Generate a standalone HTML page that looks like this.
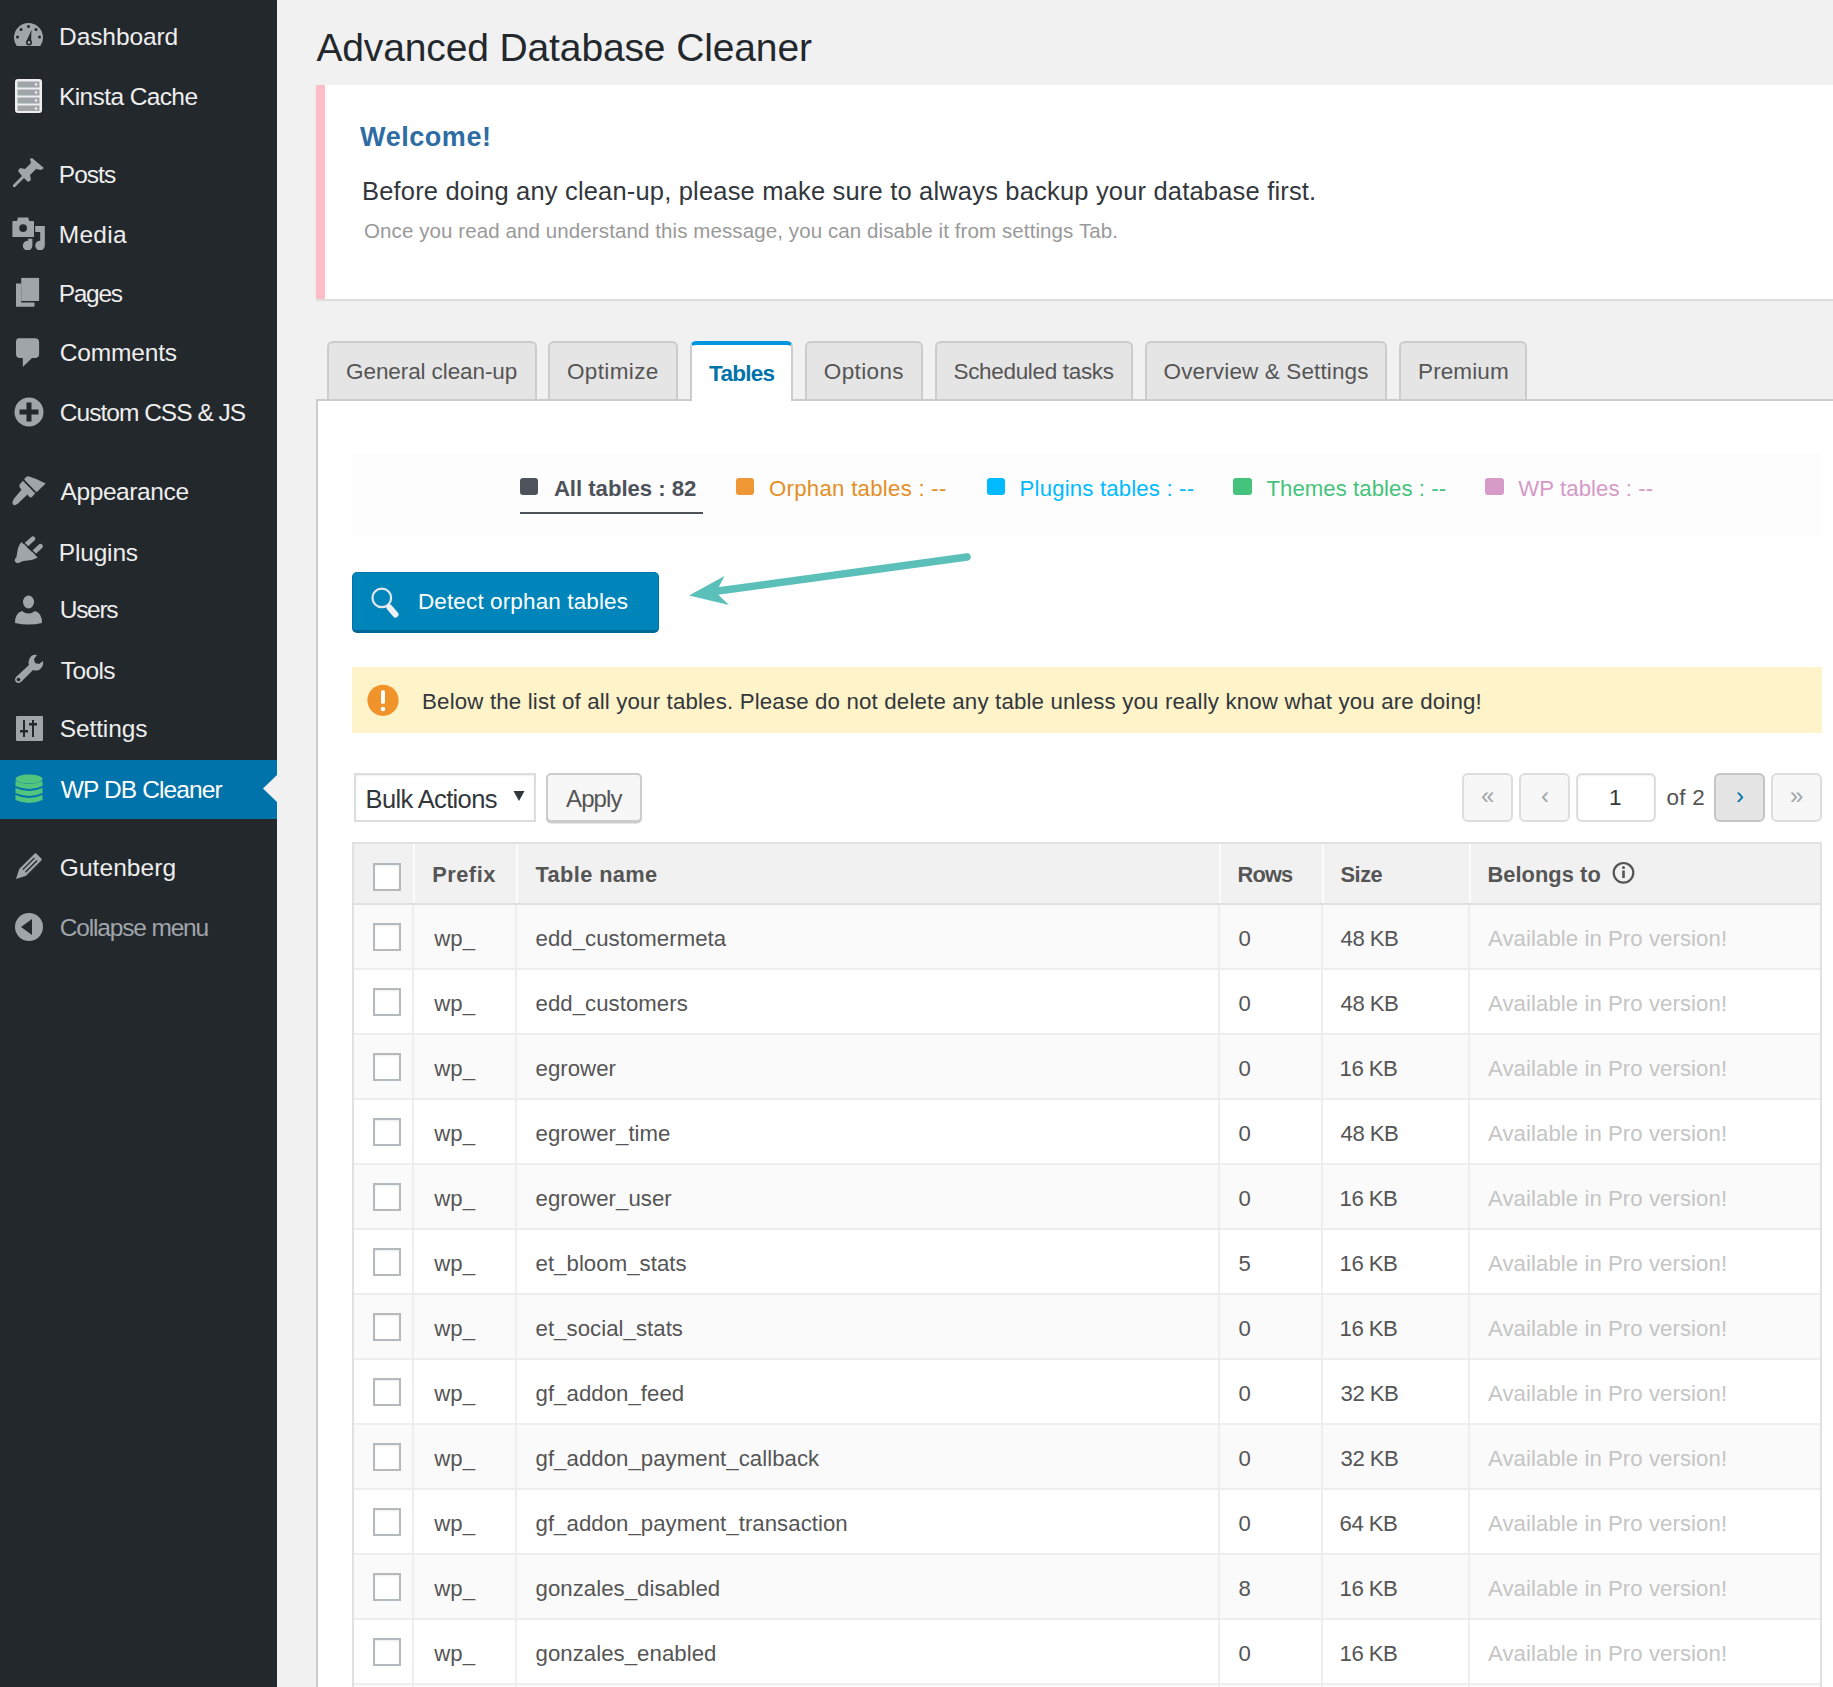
<!DOCTYPE html>
<html><head><meta charset="utf-8">
<style>
html,body{margin:0;padding:0;width:1833px;height:1687px;overflow:hidden;background:#f1f1f1;font-family:"Liberation Sans",sans-serif;}
.a{position:absolute;box-sizing:border-box;}
.t{position:absolute;white-space:nowrap;line-height:1;font-family:"Liberation Sans",sans-serif;}
#side{left:0;top:0;width:277px;height:1687px;background:#23282d;}
.ic{position:absolute;}
.tab{position:absolute;top:341px;height:58px;box-sizing:border-box;border:2px solid #ccc;border-bottom:none;border-radius:6px 6px 0 0;background:#e5e5e5;}
.pg{position:absolute;top:773px;height:49px;box-sizing:border-box;border:2px solid #ddd;border-radius:6px;background:#f7f7f7;}
.cb{position:absolute;left:373px;width:28px;height:28px;box-sizing:border-box;border:2px solid #b4b9be;background:#fff;box-shadow:inset 0 1px 2px rgba(0,0,0,.08);}
.row{position:absolute;left:354px;width:1466px;height:65px;}
.vl{position:absolute;width:2px;background:#eeeeee;}
</style></head><body>
<!-- sidebar -->
<div class="a" id="side"></div>
<div class="a" style="left:0;top:760px;width:277px;height:59px;background:#0073aa"></div>
<svg class="ic" style="left:262px;top:774px" width="16" height="30"><polygon points="15,1 1,14.5 15,28" fill="#f1f1f1"/></svg>

<!-- sidebar icons -->
<svg class="ic" style="left:12px;top:20px" width="34" height="30" viewBox="0 0 34 30">
 <path d="M4.75,26 A14.5,14.5 0 1 1 28.25,26 Z" fill="#a0a5aa"/>
 <circle cx="16.5" cy="6.5" r="1.5" fill="#23282d"/><circle cx="9" cy="9.5" r="1.5" fill="#23282d"/><circle cx="24" cy="9.5" r="1.5" fill="#23282d"/>
 <circle cx="5.5" cy="17" r="1.5" fill="#23282d"/><circle cx="27.5" cy="17" r="1.5" fill="#23282d"/>
 <path d="M14.5,21 L19.5,10 L19,22.5 Z" fill="#23282d"/><circle cx="17" cy="22.5" r="3" fill="#23282d"/><circle cx="17" cy="22.5" r="1.4" fill="#a0a5aa"/>
</svg>
<svg class="ic" style="left:14px;top:78px" width="30" height="36" viewBox="0 0 30 36">
 <rect x="1" y="1" width="27" height="34" rx="3" fill="#eee"/>
 <rect x="3.5" y="3.5" width="22" height="6" fill="#a0a5aa"/><rect x="3.5" y="11.5" width="22" height="6" fill="#a0a5aa"/>
 <rect x="3.5" y="19.5" width="22" height="6" fill="#a0a5aa"/><rect x="3.5" y="27.5" width="22" height="5.5" fill="#a0a5aa"/>
 <circle cx="22" cy="6.5" r="1.3" fill="#eee"/><circle cx="22" cy="14.5" r="1.3" fill="#eee"/><circle cx="22" cy="22.5" r="1.3" fill="#eee"/><circle cx="22" cy="30.5" r="1.3" fill="#eee"/>
</svg>
<svg class="ic" style="left:12px;top:156px" width="34" height="34" viewBox="0 0 34 34">
 <path d="M20,2 L32,12 L29,14 L24,13 L18,19 L19,24 L16,26 L12,22 L3,31 L1,31 L1,29 L10,20 L6,15 L8,12 L13,13 L19,7 L18,3 Z" fill="#a0a5aa"/>
</svg>
<svg class="ic" style="left:10px;top:214px" width="40" height="36" viewBox="10 214 40 36">
 <path d="M12.4,222 Q12.4,221 13.4,221 L17,221 L18,217.4 L28.2,217.4 L29.2,221 L33,221 Q34,221 34,222 L34,237 L12.4,237 Z" fill="#a0a5aa"/>
 <circle cx="23.1" cy="228.1" r="3.9" fill="#23282d"/>
 <path d="M35.2,226 L44.8,226 L44.8,245.5 A4.8,4.8 0 1 1 40.2,240.8 L40.2,232 L35.2,232 Z" fill="#a0a5aa"/>
 <path d="M28.1,238.8 L32.4,238.8 L32.4,245.5 A4.8,4.8 0 1 1 28.1,240.9 Z" fill="#a0a5aa"/>
</svg>
<svg class="ic" style="left:10px;top:274px" width="36" height="36" viewBox="10 274 36 36">
 <rect x="21.2" y="277.9" width="17.9" height="23.1" fill="#a0a5aa"/>
 <path d="M16,283.6 L21.2,283.6 L21.2,302.4 L34.5,302.4 L34.5,306.7 L16,306.7 Z" fill="#a0a5aa"/>
</svg>
<svg class="ic" style="left:14px;top:337px" width="28" height="32" viewBox="0 0 28 32">
 <path d="M4.5,1.2 L21,1.2 Q25.1,1.2 25.1,5 L25.1,17 Q25.1,21 21,21 L18,21 L8.8,30 L8.8,21 L6,21 Q2,21 2,17 L2,5 Q2,1.2 4.5,1.2 Z" fill="#a0a5aa"/>
</svg>
<svg class="ic" style="left:13px;top:396px" width="32" height="32" viewBox="0 0 32 32">
 <circle cx="16" cy="16" r="14.5" fill="#a0a5aa"/>
 <rect x="13.5" y="6.5" width="5" height="19" fill="#23282d"/><rect x="6.5" y="13.5" width="19" height="5" fill="#23282d"/>
</svg>
<svg class="ic" style="left:0px;top:465px" width="60" height="50" viewBox="0 465 60 50">
 <path d="M24.1,479.7 Q26,476 29,476.4 Q37,478.5 45.7,483.6 L35.8,493 Z" fill="#a0a5aa"/>
 <path d="M19.6,484.6 L23,480.8 L35.2,493.2 L32,497 Q30.5,498 29,496.5 L27.4,494.4 L17.5,504 Q13.5,506.5 12.5,503.5 Q12,501 14.5,498 L21.5,489.8 L19.8,487.8 Q19,486 19.6,484.6 Z" fill="#a0a5aa"/>
 <path d="M23.6,480 L36,492.8" stroke="#23282d" stroke-width="1.3"/>
</svg>
<svg class="ic" style="left:0px;top:530px" width="60" height="40" viewBox="0 530 60 40">
 <path d="M26.5,544.5 L32.9,538.8 M33.8,552.5 L40.5,546.3" stroke="#a0a5aa" stroke-width="4.8" stroke-linecap="round"/>
 <path d="M21.5,542 L37.8,557.6 Q33,560.5 27,560.5 Q22,561 19.6,562.5 Q17,564.5 15,561.5 Q14,559.5 16.5,557 Q17,552 18,548.5 Q19,544.5 21.5,542 Z" fill="#a0a5aa"/>
 <path d="M22.1,541.2 L38.6,557" stroke="#23282d" stroke-width="1.4"/>
</svg>
<svg class="ic" style="left:14px;top:594px" width="30" height="32" viewBox="0 0 30 32">
 <ellipse cx="14.5" cy="8" rx="5.5" ry="6.5" fill="#a0a5aa"/>
 <path d="M1,29 Q1,19 8,17 Q14.5,22 21,17 Q28,19 28,29 Q14.5,32 1,29 Z" fill="#a0a5aa"/>
</svg>
<svg class="ic" style="left:13px;top:654px" width="32" height="32" viewBox="0 0 32 32">
 <path d="M24,1 Q18,0 16,6 Q15,9 16,11 L3,23 Q1,26 3,28 Q5,30 8,28 L20,16 Q23,17 26,16 Q31,13 30,7 L26,10 L22,9 L21,5 Z" fill="#a0a5aa"/>
 <circle cx="5.5" cy="25.5" r="1.8" fill="#23282d"/>
</svg>
<svg class="ic" style="left:15px;top:715px" width="30" height="28" viewBox="0 0 30 28">
 <rect x="1" y="1" width="27" height="25" rx="1" fill="#a0a5aa"/>
 <rect x="8" y="5" width="2" height="17" fill="#23282d"/><rect x="5" y="15" width="8" height="2.5" fill="#23282d"/>
 <rect x="17" y="5" width="2" height="17" fill="#23282d"/><rect x="14" y="8" width="8" height="2.5" fill="#23282d"/>
</svg>
<svg class="ic" style="left:14px;top:774px" width="30" height="32" viewBox="0 0 30 32">
 <ellipse cx="15" cy="5" rx="13.5" ry="4.5" fill="#52c47e"/>
 <path d="M1.5,7 Q15,13 28.5,7 L28.5,12 Q15,18 1.5,12 Z" fill="#52c47e"/>
 <path d="M1.5,14 Q15,20 28.5,14 L28.5,19 Q15,25 1.5,19 Z" fill="#52c47e"/>
 <path d="M1.5,21 Q15,27 28.5,21 L28.5,26 Q15,32 1.5,26 Z" fill="#52c47e"/>
</svg>
<svg class="ic" style="left:15px;top:852px" width="28" height="30" viewBox="0 0 28 30">
 <path d="M1,27 L4.2,17 L19.5,1.7 Q20.5,0.8 21.5,1.7 L26.3,6.5 Q27.2,7.5 26.3,8.5 L11,23.8 Z" fill="#a0a5aa"/>
 <path d="M7.8,17.6 L19.5,5.9 M10.4,20.2 L22.1,8.5" stroke="#23282d" stroke-width="1.3"/>
</svg>
<svg class="ic" style="left:13px;top:911px" width="32" height="32" viewBox="0 0 32 32">
 <circle cx="16" cy="16" r="14" fill="#a0a5aa"/>
 <path d="M8,16 L19,8 L19,24 Z" fill="#23282d"/>
</svg>

<!-- notice -->
<div class="a" style="left:316px;top:85px;width:1540px;height:214px;background:#fff;border-left:9px solid #ffbcc9;box-shadow:0 2px 1px rgba(0,0,0,.08)"></div>

<!-- panel -->
<div class="a" style="left:316px;top:399px;width:1540px;height:1300px;background:#fff;border-left:2px solid #ccc;border-top:2px solid #ccc"></div>

<!-- tabs -->
<div class="tab" style="left:327px;width:210px"></div>
<div class="tab" style="left:548px;width:130px"></div>
<div class="tab" style="left:690px;width:103px;background:#fff;border-top:4px solid #0096dd;height:60px"></div>
<div class="tab" style="left:805px;width:118px"></div>
<div class="tab" style="left:935px;width:198px"></div>
<div class="tab" style="left:1145px;width:242px"></div>
<div class="tab" style="left:1399px;width:128px"></div>

<!-- legend -->
<div class="a" style="left:352px;top:453px;width:1470px;height:83px;background:#fdfdfd"></div>
<div class="a" style="left:520px;top:478px;width:18px;height:17px;border-radius:3px;background:#4d525b"></div>
<div class="a" style="left:520px;top:511.5px;width:183px;height:2.5px;background:#4d525b"></div>
<div class="a" style="left:736px;top:478px;width:18px;height:17px;border-radius:3px;background:#ee9734"></div>
<div class="a" style="left:987px;top:478px;width:18px;height:17px;border-radius:3px;background:#00baff"></div>
<div class="a" style="left:1233px;top:478px;width:19px;height:17px;border-radius:3px;background:#45c37c"></div>
<div class="a" style="left:1485px;top:478px;width:19px;height:17px;border-radius:3px;background:#d59ac8"></div>

<!-- button -->
<div class="a" style="left:352px;top:572px;width:307px;height:61px;border-radius:5px;background:#0085ba;border:1px solid #0073aa;border-bottom:3px solid #006799"></div>
<svg class="ic" style="left:369px;top:586px" width="32" height="33" viewBox="0 0 32 33">
 <circle cx="12.8" cy="11.9" r="9.3" fill="none" stroke="#e3e8ec" stroke-width="2.2"/>
 <path d="M20.5,21.5 L26.5,28.5" stroke="#eef2f5" stroke-width="6" stroke-linecap="round"/>
</svg>

<!-- arrow -->
<svg class="ic" style="left:680px;top:545px" width="300" height="70" viewBox="680 545 300 70">
 <path d="M967,557 L714,591.5" stroke="#5bbfba" stroke-width="7.5" stroke-linecap="round"/>
 <polygon points="689,595.5 724.5,576 716,592.5 729,605" fill="#5bbfba"/>
</svg>

<!-- warning -->
<div class="a" style="left:352px;top:667px;width:1470px;height:66px;background:#fff3c9"></div>
<svg class="ic" style="left:366px;top:683px" width="35" height="35" viewBox="0 0 35 35">
 <circle cx="17" cy="17.3" r="15.6" fill="#f0932b"/>
 <rect x="15" y="7.3" width="4" height="13.5" rx="1.5" fill="#fff"/>
 <circle cx="17" cy="26" r="2.3" fill="#fff"/>
</svg>

<!-- bulk actions -->
<div class="a" style="left:354px;top:773px;width:182px;height:49px;background:#fff;border:2px solid #ddd;box-shadow:inset 0 1px 2px rgba(0,0,0,.07)"></div>
<svg class="ic" style="left:512px;top:789px" width="14" height="14" viewBox="0 0 14 14"><polygon points="1.5,2 12.5,2 7,12" fill="#32373c"/></svg>
<div class="a" style="left:546px;top:773px;width:96px;height:49px;background:#f7f7f7;border:2px solid #ccc;border-radius:5px;box-shadow:0 1.5px 0 #ccc"></div>

<!-- pagination -->
<div class="pg" style="left:1462px;width:51px"></div>
<div class="pg" style="left:1519px;width:51px"></div>
<div class="a" style="left:1576px;top:773px;width:80px;height:49px;background:#fff;border:2px solid #ddd;border-radius:6px;box-shadow:inset 0 1px 2px rgba(0,0,0,.07)"></div>
<div class="pg" style="left:1714px;width:51px;background:#e5e5e5;border-color:#c5c5c5"></div>
<div class="pg" style="left:1771px;width:51px"></div>
<div class="t" style="left:1481px;top:784px;font-size:24px;color:#a0a5aa">&laquo;</div>
<div class="t" style="left:1541px;top:784px;font-size:24px;color:#a0a5aa">&lsaquo;</div>
<div class="t" style="left:1736px;top:784px;font-size:24px;color:#0073aa">&rsaquo;</div>
<div class="t" style="left:1790px;top:784px;font-size:24px;color:#a0a5aa">&raquo;</div>

<!-- table -->
<div class="a" style="left:352px;top:842px;width:1470px;height:900px;background:#fff;border:2px solid #e1e1e1"></div>
<div class="a" style="left:354px;top:844px;width:1466px;height:59px;background:#f1f1f1"></div>
<div class="a" style="left:354px;top:903px;width:1466px;height:2px;background:#e1e1e1"></div>
<div class="a" style="left:413px;top:844px;width:1.5px;height:59px;background:#fcfcfc"></div>
<div class="a" style="left:516px;top:844px;width:1.5px;height:59px;background:#fcfcfc"></div>
<div class="a" style="left:1219px;top:844px;width:1.5px;height:59px;background:#fcfcfc"></div>
<div class="a" style="left:1322px;top:844px;width:1.5px;height:59px;background:#fcfcfc"></div>
<div class="a" style="left:1469px;top:844px;width:1.5px;height:59px;background:#fcfcfc"></div>
<div class="row" style="top:905px;background:#fafafa"></div>
<div class="a" style="left:354px;top:968px;width:1466px;height:2px;background:#eeeeee"></div>
<div class="vl" style="left:412px;top:905px;height:63px"></div>
<div class="vl" style="left:515px;top:905px;height:63px"></div>
<div class="vl" style="left:1218px;top:905px;height:63px"></div>
<div class="vl" style="left:1321px;top:905px;height:63px"></div>
<div class="vl" style="left:1468px;top:905px;height:63px"></div>
<div class="cb" style="top:922.5px"></div>
<div class="row" style="top:970px;background:#fff"></div>
<div class="a" style="left:354px;top:1033px;width:1466px;height:2px;background:#eeeeee"></div>
<div class="vl" style="left:412px;top:970px;height:63px"></div>
<div class="vl" style="left:515px;top:970px;height:63px"></div>
<div class="vl" style="left:1218px;top:970px;height:63px"></div>
<div class="vl" style="left:1321px;top:970px;height:63px"></div>
<div class="vl" style="left:1468px;top:970px;height:63px"></div>
<div class="cb" style="top:987.5px"></div>
<div class="row" style="top:1035px;background:#fafafa"></div>
<div class="a" style="left:354px;top:1098px;width:1466px;height:2px;background:#eeeeee"></div>
<div class="vl" style="left:412px;top:1035px;height:63px"></div>
<div class="vl" style="left:515px;top:1035px;height:63px"></div>
<div class="vl" style="left:1218px;top:1035px;height:63px"></div>
<div class="vl" style="left:1321px;top:1035px;height:63px"></div>
<div class="vl" style="left:1468px;top:1035px;height:63px"></div>
<div class="cb" style="top:1052.5px"></div>
<div class="row" style="top:1100px;background:#fff"></div>
<div class="a" style="left:354px;top:1163px;width:1466px;height:2px;background:#eeeeee"></div>
<div class="vl" style="left:412px;top:1100px;height:63px"></div>
<div class="vl" style="left:515px;top:1100px;height:63px"></div>
<div class="vl" style="left:1218px;top:1100px;height:63px"></div>
<div class="vl" style="left:1321px;top:1100px;height:63px"></div>
<div class="vl" style="left:1468px;top:1100px;height:63px"></div>
<div class="cb" style="top:1117.5px"></div>
<div class="row" style="top:1165px;background:#fafafa"></div>
<div class="a" style="left:354px;top:1228px;width:1466px;height:2px;background:#eeeeee"></div>
<div class="vl" style="left:412px;top:1165px;height:63px"></div>
<div class="vl" style="left:515px;top:1165px;height:63px"></div>
<div class="vl" style="left:1218px;top:1165px;height:63px"></div>
<div class="vl" style="left:1321px;top:1165px;height:63px"></div>
<div class="vl" style="left:1468px;top:1165px;height:63px"></div>
<div class="cb" style="top:1182.5px"></div>
<div class="row" style="top:1230px;background:#fff"></div>
<div class="a" style="left:354px;top:1293px;width:1466px;height:2px;background:#eeeeee"></div>
<div class="vl" style="left:412px;top:1230px;height:63px"></div>
<div class="vl" style="left:515px;top:1230px;height:63px"></div>
<div class="vl" style="left:1218px;top:1230px;height:63px"></div>
<div class="vl" style="left:1321px;top:1230px;height:63px"></div>
<div class="vl" style="left:1468px;top:1230px;height:63px"></div>
<div class="cb" style="top:1247.5px"></div>
<div class="row" style="top:1295px;background:#fafafa"></div>
<div class="a" style="left:354px;top:1358px;width:1466px;height:2px;background:#eeeeee"></div>
<div class="vl" style="left:412px;top:1295px;height:63px"></div>
<div class="vl" style="left:515px;top:1295px;height:63px"></div>
<div class="vl" style="left:1218px;top:1295px;height:63px"></div>
<div class="vl" style="left:1321px;top:1295px;height:63px"></div>
<div class="vl" style="left:1468px;top:1295px;height:63px"></div>
<div class="cb" style="top:1312.5px"></div>
<div class="row" style="top:1360px;background:#fff"></div>
<div class="a" style="left:354px;top:1423px;width:1466px;height:2px;background:#eeeeee"></div>
<div class="vl" style="left:412px;top:1360px;height:63px"></div>
<div class="vl" style="left:515px;top:1360px;height:63px"></div>
<div class="vl" style="left:1218px;top:1360px;height:63px"></div>
<div class="vl" style="left:1321px;top:1360px;height:63px"></div>
<div class="vl" style="left:1468px;top:1360px;height:63px"></div>
<div class="cb" style="top:1377.5px"></div>
<div class="row" style="top:1425px;background:#fafafa"></div>
<div class="a" style="left:354px;top:1488px;width:1466px;height:2px;background:#eeeeee"></div>
<div class="vl" style="left:412px;top:1425px;height:63px"></div>
<div class="vl" style="left:515px;top:1425px;height:63px"></div>
<div class="vl" style="left:1218px;top:1425px;height:63px"></div>
<div class="vl" style="left:1321px;top:1425px;height:63px"></div>
<div class="vl" style="left:1468px;top:1425px;height:63px"></div>
<div class="cb" style="top:1442.5px"></div>
<div class="row" style="top:1490px;background:#fff"></div>
<div class="a" style="left:354px;top:1553px;width:1466px;height:2px;background:#eeeeee"></div>
<div class="vl" style="left:412px;top:1490px;height:63px"></div>
<div class="vl" style="left:515px;top:1490px;height:63px"></div>
<div class="vl" style="left:1218px;top:1490px;height:63px"></div>
<div class="vl" style="left:1321px;top:1490px;height:63px"></div>
<div class="vl" style="left:1468px;top:1490px;height:63px"></div>
<div class="cb" style="top:1507.5px"></div>
<div class="row" style="top:1555px;background:#fafafa"></div>
<div class="a" style="left:354px;top:1618px;width:1466px;height:2px;background:#eeeeee"></div>
<div class="vl" style="left:412px;top:1555px;height:63px"></div>
<div class="vl" style="left:515px;top:1555px;height:63px"></div>
<div class="vl" style="left:1218px;top:1555px;height:63px"></div>
<div class="vl" style="left:1321px;top:1555px;height:63px"></div>
<div class="vl" style="left:1468px;top:1555px;height:63px"></div>
<div class="cb" style="top:1572.5px"></div>
<div class="row" style="top:1620px;background:#fff"></div>
<div class="a" style="left:354px;top:1683px;width:1466px;height:2px;background:#eeeeee"></div>
<div class="vl" style="left:412px;top:1620px;height:63px"></div>
<div class="vl" style="left:515px;top:1620px;height:63px"></div>
<div class="vl" style="left:1218px;top:1620px;height:63px"></div>
<div class="vl" style="left:1321px;top:1620px;height:63px"></div>
<div class="vl" style="left:1468px;top:1620px;height:63px"></div>
<div class="cb" style="top:1637.5px"></div>
<div class="row" style="top:1685px;background:#fafafa"></div>
<div class="a" style="left:354px;top:1748px;width:1466px;height:2px;background:#eeeeee"></div>
<div class="vl" style="left:412px;top:1685px;height:63px"></div>
<div class="vl" style="left:515px;top:1685px;height:63px"></div>
<div class="vl" style="left:1218px;top:1685px;height:63px"></div>
<div class="vl" style="left:1321px;top:1685px;height:63px"></div>
<div class="vl" style="left:1468px;top:1685px;height:63px"></div>
<div class="cb" style="top:1702.5px"></div>
<div class="cb" style="top:863px"></div>
<svg class="ic" style="left:1611px;top:861px" width="25" height="25" viewBox="0 0 25 25">
 <circle cx="12.5" cy="11.8" r="9.8" fill="none" stroke="#555" stroke-width="2.2"/>
 <rect x="11.2" y="9.5" width="2.6" height="7.5" fill="#555"/><circle cx="12.5" cy="6.6" r="1.5" fill="#555"/>
</svg>

<div class="t" style="left:59.1px;top:25.0px;font-size:24.5px;font-weight:400;color:#eee;letter-spacing:-0.10px">Dashboard</div>
<div class="t" style="left:59.0px;top:85.4px;font-size:24.5px;font-weight:400;color:#eee;letter-spacing:-0.61px">Kinsta Cache</div>
<div class="t" style="left:58.8px;top:162.8px;font-size:24.5px;font-weight:400;color:#eee;letter-spacing:-0.98px">Posts</div>
<div class="t" style="left:58.8px;top:223.2px;font-size:24.5px;font-weight:400;color:#eee;letter-spacing:0.27px">Media</div>
<div class="t" style="left:58.8px;top:281.9px;font-size:24.5px;font-weight:400;color:#eee;letter-spacing:-1.33px">Pages</div>
<div class="t" style="left:59.8px;top:341.4px;font-size:24.5px;font-weight:400;color:#eee;letter-spacing:-0.16px">Comments</div>
<div class="t" style="left:59.8px;top:401.0px;font-size:24.5px;font-weight:400;color:#eee;letter-spacing:-0.98px">Custom CSS &amp; JS</div>
<div class="t" style="left:60.5px;top:480.1px;font-size:24.5px;font-weight:400;color:#eee;letter-spacing:-0.40px">Appearance</div>
<div class="t" style="left:58.8px;top:540.5px;font-size:24.5px;font-weight:400;color:#eee;letter-spacing:-0.18px">Plugins</div>
<div class="t" style="left:59.8px;top:598.3px;font-size:24.5px;font-weight:400;color:#eee;letter-spacing:-1.33px">Users</div>
<div class="t" style="left:60.8px;top:658.8px;font-size:24.5px;font-weight:400;color:#eee;letter-spacing:-0.64px">Tools</div>
<div class="t" style="left:59.8px;top:717.4px;font-size:24.5px;font-weight:400;color:#eee;letter-spacing:-0.13px">Settings</div>
<div class="t" style="left:60.8px;top:778.2px;font-size:24.5px;font-weight:400;color:#fff;letter-spacing:-0.88px">WP DB Cleaner</div>
<div class="t" style="left:59.8px;top:856.1px;font-size:24.5px;font-weight:400;color:#eee;letter-spacing:0.06px">Gutenberg</div>
<div class="t" style="left:59.8px;top:915.6px;font-size:24.5px;font-weight:400;color:#a0a5aa;letter-spacing:-1.17px">Collapse menu</div>
<div class="t" style="left:316.4px;top:27.6px;font-size:39px;font-weight:400;color:#23282d;letter-spacing:-0.13px">Advanced Database Cleaner</div>
<div class="t" style="left:360.1px;top:123.5px;font-size:27px;font-weight:700;color:#2e6da4;letter-spacing:0.55px">Welcome!</div>
<div class="t" style="left:362.0px;top:179.3px;font-size:25.5px;font-weight:400;color:#32373c;letter-spacing:0.18px">Before doing any clean-up, please make sure to always backup your database first.</div>
<div class="t" style="left:364.0px;top:221.2px;font-size:20.5px;font-weight:400;color:#999;letter-spacing:0.10px">Once you read and understand this message, you can disable it from settings Tab.</div>
<div class="t" style="left:346.1px;top:360.7px;font-size:22.5px;font-weight:400;color:#555;letter-spacing:-0.10px">General clean-up</div>
<div class="t" style="left:567.0px;top:360.7px;font-size:22.5px;font-weight:400;color:#555;letter-spacing:0.36px">Optimize</div>
<div class="t" style="left:823.8px;top:360.7px;font-size:22.5px;font-weight:400;color:#555;letter-spacing:0.37px">Options</div>
<div class="t" style="left:953.5px;top:360.7px;font-size:22.5px;font-weight:400;color:#555;letter-spacing:-0.33px">Scheduled tasks</div>
<div class="t" style="left:1163.6px;top:360.7px;font-size:22.5px;font-weight:400;color:#555;letter-spacing:0.13px">Overview &amp; Settings</div>
<div class="t" style="left:1418.0px;top:360.7px;font-size:22.5px;font-weight:400;color:#555;letter-spacing:0.12px">Premium</div>
<div class="t" style="left:709.1px;top:362.9px;font-size:22.5px;font-weight:700;color:#0073aa;letter-spacing:-0.72px">Tables</div>
<div class="t" style="left:553.9px;top:477.5px;font-size:22.2px;font-weight:700;color:#4d525b;letter-spacing:-0.04px">All tables : 82</div>
<div class="t" style="left:769.0px;top:477.5px;font-size:22.2px;font-weight:400;color:#e58e26;letter-spacing:0.28px">Orphan tables : --</div>
<div class="t" style="left:1019.6px;top:477.5px;font-size:22.2px;font-weight:400;color:#00baff;letter-spacing:0.17px">Plugins tables : --</div>
<div class="t" style="left:1266.4px;top:477.5px;font-size:22.2px;font-weight:400;color:#45c37c;letter-spacing:0.05px">Themes tables : --</div>
<div class="t" style="left:1518.3px;top:477.5px;font-size:22.2px;font-weight:400;color:#d59ac8;letter-spacing:0.07px">WP tables : --</div>
<div class="t" style="left:418.0px;top:590.7px;font-size:22.5px;font-weight:400;color:#fff;letter-spacing:0.12px">Detect orphan tables</div>
<div class="t" style="left:422.1px;top:690.5px;font-size:22.3px;font-weight:400;color:#32373c;letter-spacing:0.15px">Below the list of all your tables. Please do not delete any table unless you really know what you are doing!</div>
<div class="t" style="left:365.5px;top:786.8px;font-size:25.5px;font-weight:400;color:#32373c;letter-spacing:-0.63px">Bulk Actions</div>
<div class="t" style="left:566.0px;top:786.9px;font-size:24px;font-weight:400;color:#555;letter-spacing:-0.88px">Apply</div>
<div class="t" style="left:1666.4px;top:786.6px;font-size:22.5px;font-weight:400;color:#555;letter-spacing:0.26px">of 2</div>
<div class="t" style="left:1609.0px;top:786.6px;font-size:22.5px;font-weight:400;color:#32373c;letter-spacing:0.00px">1</div>
<div class="t" style="left:432.2px;top:864.1px;font-size:21.8px;font-weight:700;color:#555;letter-spacing:0.51px">Prefix</div>
<div class="t" style="left:535.5px;top:864.1px;font-size:21.8px;font-weight:700;color:#555;letter-spacing:0.38px">Table name</div>
<div class="t" style="left:1237.5px;top:864.1px;font-size:21.8px;font-weight:700;color:#555;letter-spacing:-0.80px">Rows</div>
<div class="t" style="left:1340.6px;top:864.1px;font-size:21.8px;font-weight:700;color:#555;letter-spacing:-0.53px">Size</div>
<div class="t" style="left:1487.4px;top:864.1px;font-size:21.8px;font-weight:700;color:#555;letter-spacing:0.08px">Belongs to</div>
<div class="t" style="left:434.2px;top:928.0px;font-size:22.2px;font-weight:400;color:#555;letter-spacing:0.05px">wp_</div>
<div class="t" style="left:535.5px;top:928.0px;font-size:22.2px;font-weight:400;color:#555;letter-spacing:0.05px">edd_customermeta</div>
<div class="t" style="left:1238.5px;top:928.0px;font-size:22.2px;font-weight:400;color:#555;letter-spacing:0.00px">0</div>
<div class="t" style="left:1340.6px;top:928.0px;font-size:22.2px;font-weight:400;color:#555;letter-spacing:-0.55px">48 KB</div>
<div class="t" style="left:1488.0px;top:928.0px;font-size:22.2px;font-weight:400;color:#c5c5c5;letter-spacing:0.06px">Available in Pro version!</div>
<div class="t" style="left:434.2px;top:993.0px;font-size:22.2px;font-weight:400;color:#555;letter-spacing:0.05px">wp_</div>
<div class="t" style="left:535.5px;top:993.0px;font-size:22.2px;font-weight:400;color:#555;letter-spacing:0.05px">edd_customers</div>
<div class="t" style="left:1238.5px;top:993.0px;font-size:22.2px;font-weight:400;color:#555;letter-spacing:0.00px">0</div>
<div class="t" style="left:1340.6px;top:993.0px;font-size:22.2px;font-weight:400;color:#555;letter-spacing:-0.55px">48 KB</div>
<div class="t" style="left:1488.0px;top:993.0px;font-size:22.2px;font-weight:400;color:#c5c5c5;letter-spacing:0.06px">Available in Pro version!</div>
<div class="t" style="left:434.2px;top:1058.0px;font-size:22.2px;font-weight:400;color:#555;letter-spacing:0.05px">wp_</div>
<div class="t" style="left:535.5px;top:1058.0px;font-size:22.2px;font-weight:400;color:#555;letter-spacing:0.05px">egrower</div>
<div class="t" style="left:1238.5px;top:1058.0px;font-size:22.2px;font-weight:400;color:#555;letter-spacing:0.00px">0</div>
<div class="t" style="left:1339.6px;top:1058.0px;font-size:22.2px;font-weight:400;color:#555;letter-spacing:-0.55px">16 KB</div>
<div class="t" style="left:1488.0px;top:1058.0px;font-size:22.2px;font-weight:400;color:#c5c5c5;letter-spacing:0.06px">Available in Pro version!</div>
<div class="t" style="left:434.2px;top:1123.0px;font-size:22.2px;font-weight:400;color:#555;letter-spacing:0.05px">wp_</div>
<div class="t" style="left:535.5px;top:1123.0px;font-size:22.2px;font-weight:400;color:#555;letter-spacing:0.05px">egrower_time</div>
<div class="t" style="left:1238.5px;top:1123.0px;font-size:22.2px;font-weight:400;color:#555;letter-spacing:0.00px">0</div>
<div class="t" style="left:1340.6px;top:1123.0px;font-size:22.2px;font-weight:400;color:#555;letter-spacing:-0.55px">48 KB</div>
<div class="t" style="left:1488.0px;top:1123.0px;font-size:22.2px;font-weight:400;color:#c5c5c5;letter-spacing:0.06px">Available in Pro version!</div>
<div class="t" style="left:434.2px;top:1188.0px;font-size:22.2px;font-weight:400;color:#555;letter-spacing:0.05px">wp_</div>
<div class="t" style="left:535.5px;top:1188.0px;font-size:22.2px;font-weight:400;color:#555;letter-spacing:0.05px">egrower_user</div>
<div class="t" style="left:1238.5px;top:1188.0px;font-size:22.2px;font-weight:400;color:#555;letter-spacing:0.00px">0</div>
<div class="t" style="left:1339.6px;top:1188.0px;font-size:22.2px;font-weight:400;color:#555;letter-spacing:-0.55px">16 KB</div>
<div class="t" style="left:1488.0px;top:1188.0px;font-size:22.2px;font-weight:400;color:#c5c5c5;letter-spacing:0.06px">Available in Pro version!</div>
<div class="t" style="left:434.2px;top:1253.0px;font-size:22.2px;font-weight:400;color:#555;letter-spacing:0.05px">wp_</div>
<div class="t" style="left:535.5px;top:1253.0px;font-size:22.2px;font-weight:400;color:#555;letter-spacing:0.05px">et_bloom_stats</div>
<div class="t" style="left:1238.5px;top:1253.0px;font-size:22.2px;font-weight:400;color:#555;letter-spacing:0.00px">5</div>
<div class="t" style="left:1339.6px;top:1253.0px;font-size:22.2px;font-weight:400;color:#555;letter-spacing:-0.55px">16 KB</div>
<div class="t" style="left:1488.0px;top:1253.0px;font-size:22.2px;font-weight:400;color:#c5c5c5;letter-spacing:0.06px">Available in Pro version!</div>
<div class="t" style="left:434.2px;top:1318.0px;font-size:22.2px;font-weight:400;color:#555;letter-spacing:0.05px">wp_</div>
<div class="t" style="left:535.5px;top:1318.0px;font-size:22.2px;font-weight:400;color:#555;letter-spacing:0.05px">et_social_stats</div>
<div class="t" style="left:1238.5px;top:1318.0px;font-size:22.2px;font-weight:400;color:#555;letter-spacing:0.00px">0</div>
<div class="t" style="left:1339.6px;top:1318.0px;font-size:22.2px;font-weight:400;color:#555;letter-spacing:-0.55px">16 KB</div>
<div class="t" style="left:1488.0px;top:1318.0px;font-size:22.2px;font-weight:400;color:#c5c5c5;letter-spacing:0.06px">Available in Pro version!</div>
<div class="t" style="left:434.2px;top:1383.0px;font-size:22.2px;font-weight:400;color:#555;letter-spacing:0.05px">wp_</div>
<div class="t" style="left:535.5px;top:1383.0px;font-size:22.2px;font-weight:400;color:#555;letter-spacing:0.05px">gf_addon_feed</div>
<div class="t" style="left:1238.5px;top:1383.0px;font-size:22.2px;font-weight:400;color:#555;letter-spacing:0.00px">0</div>
<div class="t" style="left:1340.6px;top:1383.0px;font-size:22.2px;font-weight:400;color:#555;letter-spacing:-0.55px">32 KB</div>
<div class="t" style="left:1488.0px;top:1383.0px;font-size:22.2px;font-weight:400;color:#c5c5c5;letter-spacing:0.06px">Available in Pro version!</div>
<div class="t" style="left:434.2px;top:1448.0px;font-size:22.2px;font-weight:400;color:#555;letter-spacing:0.05px">wp_</div>
<div class="t" style="left:535.5px;top:1448.0px;font-size:22.2px;font-weight:400;color:#555;letter-spacing:0.05px">gf_addon_payment_callback</div>
<div class="t" style="left:1238.5px;top:1448.0px;font-size:22.2px;font-weight:400;color:#555;letter-spacing:0.00px">0</div>
<div class="t" style="left:1340.6px;top:1448.0px;font-size:22.2px;font-weight:400;color:#555;letter-spacing:-0.55px">32 KB</div>
<div class="t" style="left:1488.0px;top:1448.0px;font-size:22.2px;font-weight:400;color:#c5c5c5;letter-spacing:0.06px">Available in Pro version!</div>
<div class="t" style="left:434.2px;top:1513.0px;font-size:22.2px;font-weight:400;color:#555;letter-spacing:0.05px">wp_</div>
<div class="t" style="left:535.5px;top:1513.0px;font-size:22.2px;font-weight:400;color:#555;letter-spacing:0.05px">gf_addon_payment_transaction</div>
<div class="t" style="left:1238.5px;top:1513.0px;font-size:22.2px;font-weight:400;color:#555;letter-spacing:0.00px">0</div>
<div class="t" style="left:1339.6px;top:1513.0px;font-size:22.2px;font-weight:400;color:#555;letter-spacing:-0.55px">64 KB</div>
<div class="t" style="left:1488.0px;top:1513.0px;font-size:22.2px;font-weight:400;color:#c5c5c5;letter-spacing:0.06px">Available in Pro version!</div>
<div class="t" style="left:434.2px;top:1578.0px;font-size:22.2px;font-weight:400;color:#555;letter-spacing:0.05px">wp_</div>
<div class="t" style="left:535.5px;top:1578.0px;font-size:22.2px;font-weight:400;color:#555;letter-spacing:0.05px">gonzales_disabled</div>
<div class="t" style="left:1238.5px;top:1578.0px;font-size:22.2px;font-weight:400;color:#555;letter-spacing:0.00px">8</div>
<div class="t" style="left:1339.6px;top:1578.0px;font-size:22.2px;font-weight:400;color:#555;letter-spacing:-0.55px">16 KB</div>
<div class="t" style="left:1488.0px;top:1578.0px;font-size:22.2px;font-weight:400;color:#c5c5c5;letter-spacing:0.06px">Available in Pro version!</div>
<div class="t" style="left:434.2px;top:1643.0px;font-size:22.2px;font-weight:400;color:#555;letter-spacing:0.05px">wp_</div>
<div class="t" style="left:535.5px;top:1643.0px;font-size:22.2px;font-weight:400;color:#555;letter-spacing:0.05px">gonzales_enabled</div>
<div class="t" style="left:1238.5px;top:1643.0px;font-size:22.2px;font-weight:400;color:#555;letter-spacing:0.00px">0</div>
<div class="t" style="left:1339.6px;top:1643.0px;font-size:22.2px;font-weight:400;color:#555;letter-spacing:-0.55px">16 KB</div>
<div class="t" style="left:1488.0px;top:1643.0px;font-size:22.2px;font-weight:400;color:#c5c5c5;letter-spacing:0.06px">Available in Pro version!</div>
</body></html>
